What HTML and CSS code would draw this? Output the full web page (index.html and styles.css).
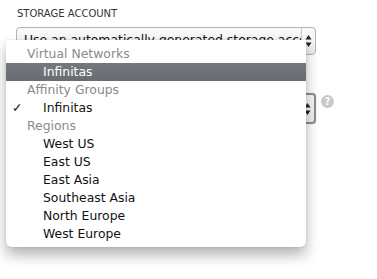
FILE: index.html
```html
<!DOCTYPE html>
<html lang="en">
<head>
    <meta charset="UTF-8">
    <title>Storage account</title>
    <link rel="stylesheet" href="styles.css">
</head>
<body>
    <div class="form">
        <div class="field-label">Storage Account</div>
        <div class="select">
            <span class="select-text">Use an automatically generated storage acco:</span>
            <span class="stepper">
                <svg width="7" height="14" viewBox="0 0 7 14"><path d="M3.5 1 L6.5 5.5 L0.5 5.5 Z M3.5 13 L6.5 8.5 L0.5 8.5 Z" fill="#222"/></svg>
            </span>
        </div>

        <div class="field-row">
            <div class="select select-focus">
                <span class="select-text"></span>
                <span class="stepper">
                    <svg width="7" height="14" viewBox="0 0 7 14"><path d="M3.5 1 L6.5 5.5 L0.5 5.5 Z M3.5 13 L6.5 8.5 L0.5 8.5 Z" fill="#222"/></svg>
                </span>
            </div>
            <span class="help">?</span>
        </div>
    </div>

    <!-- popup menu over the form -->
    <ul class="menu">
        <li class="group">Virtual Networks</li>
        <li class="item active">Infinitas</li>
        <li class="group">Affinity Groups</li>
        <li class="item checked">Infinitas</li>
        <li class="group">Regions</li>
        <li class="item">West US</li>
        <li class="item">East US</li>
        <li class="item">East Asia</li>
        <li class="item">Southeast Asia</li>
        <li class="item">North Europe</li>
        <li class="item">West Europe</li>
    </ul>
</body>
</html>
```

FILE: styles.css
```css
* {
    margin: 0;
    padding: 0;
    box-sizing: border-box;
}

body {
    font-family: "DejaVu Sans", sans-serif;
    background: #fff;
    color: #111;
    width: 377px;
    height: 279px;
    overflow: hidden;
    position: relative;
}

.form {
    padding: 8px 0 0 16px;
}

.field-label {
    font-size: 10px;
    text-transform: uppercase;
    color: #333;
    padding-left: 1px;
    line-height: 12px;
    margin-bottom: 7px;
}

.select {
    width: 300px;
    height: 28px;
    border: 1px solid #b4b4b4;
    border-radius: 4px;
    background: linear-gradient(#fafafa, #ececec);
    display: flex;
    font-size: 12.4px;
    position: relative;
}

/* only the top of the value shows above the open menu */
.select-text {
    flex: 1;
    padding-left: 7px;
    margin-top: 5px;
    height: 7px;
    line-height: 14px;
    white-space: nowrap;
    overflow: hidden;
}

.stepper {
    width: 14px;
    border-left: 1px solid #c8c8c8;
    display: flex;
    align-items: center;
    justify-content: center;
}

.field-row {
    display: flex;
    align-items: center;
    gap: 5px;
    margin-top: 38px;
}

.select-focus {
    height: 31px;
    border: 2px solid #8c8c8c;
    box-shadow: 0 0 1px #aaa;
}

.help {
    width: 13px;
    height: 13px;
    border-radius: 50%;
    background: #c9c9c9;
    color: #fff;
    font-size: 10px;
    font-weight: bold;
    line-height: 13px;
    text-align: center;
    margin-top: -14px;
}

.menu {
    position: absolute;
    left: 6px;
    top: 40px;
    width: 300px;
    list-style: none;
    background: #fff;
    border-radius: 0 0 5px 5px;
    padding: 5px 0 4px;
    box-shadow: 0 0 1px rgba(0,0,0,0.35), 0 8px 14px rgba(0,0,0,0.3);
    font-size: 12.4px;
}

.menu li {
    height: 18px;
    line-height: 18px;
    white-space: nowrap;
    position: relative;
}

.group {
    color: #8a8a8a;
    padding-left: 21px;
}

.item {
    padding-left: 37px;
    color: #111;
}

.item.active {
    background: linear-gradient(#75797e, #686c72);
    color: #fff;
}

.item.checked::before {
    content: "\2713";
    position: absolute;
    left: 6px;
    top: 0;
}
```
